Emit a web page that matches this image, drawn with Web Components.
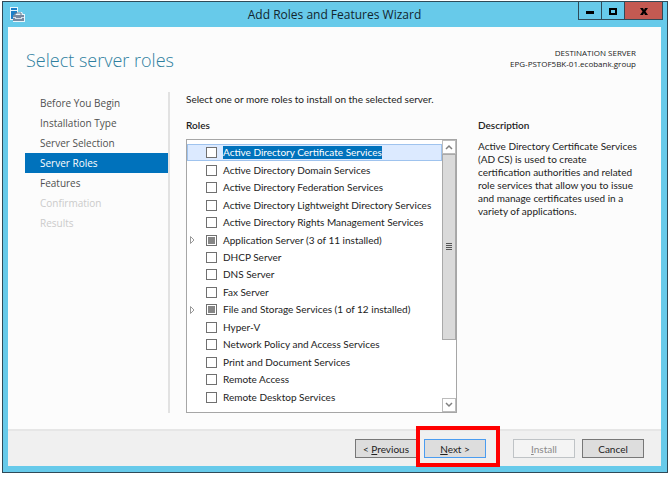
<!DOCTYPE html>
<html lang="en">
<head>
<meta charset="utf-8">
<meta name="viewport" content="width=device-width, initial-scale=1">
<title>Add Roles and Features Wizard</title>
<style>
    body {
        margin: 0;
        background: #fff;
        color: #222;
        font: 10px/13px Lato, "Open Sans", sans-serif;
    }
</style>
</head>
<body>
<wizard-window caption="Add Roles and Features Wizard">
    <wizard-header slot="header" heading="Select server roles" server="EPG-PSTOF5BK-01.ecobank.group"></wizard-header>
    <wizard-steps slot="steps" current="Server Roles"></wizard-steps>
    <role-list slot="main"></role-list>
    <role-description slot="aside" heading="Description">Active Directory Certificate Services (AD CS) is used to create certification authorities and related role services that allow you to issue and manage certificates used in a variety of applications.</role-description>
    <wizard-button slot="footer" text="&lt; Previous" key="P"></wizard-button>
    <wizard-button slot="footer" text="Next &gt;" key="N" primary marked></wizard-button>
    <wizard-button slot="footer" text="Install" key="I" disabled></wizard-button>
    <wizard-button slot="footer" text="Cancel"></wizard-button>
</wizard-window>

<script>
class WizardWindow extends HTMLElement {
    constructor() {
        super();
        this.attachShadow({ mode: 'open' });
        this.shadowRoot.innerHTML = `
        <style>
        :host {
            display: flex;
            flex-direction: column;
            box-sizing: border-box;
            min-height: 100vh;
            padding: 1px 3px 4px 2px;
        }

        .frame {
            flex: 1;
            display: flex;
            flex-direction: column;
            padding: 0 6px 6px 5px;
            border: 1px solid #2f4a58;
            background: #67caea;
        }

        .titlebar {
            display: grid;
            grid-template-columns: 85px 1fr 85px;
            height: 25px;
        }

        .titlebar svg {
            display: block;
        }

        .app-icon {
            margin: 4px 0 0 2px;
        }

        h1 {
            margin: 0;
            padding-top: 4px;
            color: #12262e;
            font-family: "Open Sans", sans-serif;
            font-size: 12px;
            line-height: 18px;
            font-weight: 400;
            text-align: center;
            white-space: nowrap;
        }

        .controls {
            display: flex;
            justify-content: flex-end;
            align-items: flex-start;
            margin: -1px -2px 0 0;
        }

        .controls button {
            display: grid;
            place-items: center;
            box-sizing: border-box;
            width: 24px;
            height: 19px;
            margin: 0 0 0 -1px;
            padding: 0;
            border: 1px solid #2f4a58;
            background: #67caea;
        }

        .controls .close {
            width: 39px;
            background: #c45a52;
        }

        .client {
            flex: 1;
            display: flex;
            flex-direction: column;
            background: #fcfcfc;
        }

        .columns {
            flex: 1;
            display: grid;
            grid-template-columns: 145px 1fr 164px;
            padding: 0 19px 16px 17px;
        }

        .main {
            display: grid;
            padding: 0 21px 0 16px;
        }

        footer {
            display: flex;
            justify-content: flex-end;
            gap: 7px;
            padding: 8px 17px 8px 0;
            border-top: 2px solid #e6e6e6;
            background: #f0f0f0;
        }
        </style>

        <div class="frame">
            <div class="titlebar">
                <svg class="app-icon" width="16" height="16" viewBox="0 0 16 16">
                    <path d="M0 1h8v5h4l1 2h2v8H3v-2H0z" fill="#e8f6fc"/>
                    <path d="M1 2h6v2H1zM1 5h6v2L4 9v4H1z" fill="#1b7fc8"/>
                    <path d="M5 9V7h6v2" fill="none" stroke="#66788c"/>
                    <path d="M3 9h11v6H3z" fill="#7789a0"/>
                    <path d="M3 11h3v1h5v-1h3v1h-2v1H5v-1H3z" fill="#d5dee8"/>
                </svg>
                <h1>${this.getAttribute('caption')}</h1>
                <div class="controls">
                    <button type="button" aria-label="Minimize">
                        <svg width="10" height="10"><path d="M1 5h8v3H1z"/></svg>
                    </button>
                    <button type="button" aria-label="Maximize">
                        <svg width="10" height="10"><path d="M2 3h6v5H2z" fill="none" stroke="#000" stroke-width="2"/></svg>
                    </button>
                    <button type="button" class="close" aria-label="Close">
                        <svg width="10" height="10"><path d="M1 2h3l1 2 1-2h3L6.500 5.500 9 9H6L5 7 4 9H1l2.500-3.500z"/></svg>
                    </button>
                </div>
            </div>
            <div class="client">
                <slot name="header"></slot>
                <div class="columns">
                    <slot name="steps"></slot>
                    <div class="main"><slot name="main"></slot></div>
                    <slot name="aside"></slot>
                </div>
                <footer><slot name="footer"></slot></footer>
            </div>
        </div>
        `
    }
}

class WizardHeader extends HTMLElement {
    constructor() {
        super();
        this.attachShadow({ mode: 'open' });
        this.shadowRoot.innerHTML = `
        <style>
        :host {
            display: flex;
            justify-content: space-between;
            height: 65px;
            padding: 0 25px 0 18px;
            font-family: "Open Sans", sans-serif;
        }

        h2 {
            margin: 18px 0 0;
            color: #2f7f9f;
            font-size: 18px;
            line-height: 30px;
            font-weight: 300;
        }

        p {
            margin: 20px 0 0;
            font-size: 8px;
            line-height: 11px;
            text-align: right;
        }
        </style>

        <h2>${this.getAttribute('heading')}</h2>
        <p>DESTINATION SERVER<br>${this.getAttribute('server')}</p>
        `
    }
}

class WizardSteps extends HTMLElement {
    constructor() {
        super();
        const steps = ['Before You Begin', 'Installation Type', 'Server Selection', 'Server Roles', 'Features', 'Confirmation', 'Results'];
        const locked = ['Confirmation', 'Results'];
        const current = this.getAttribute('current');
        this.attachShadow({ mode: 'open' });
        this.shadowRoot.innerHTML = `
        <style>
        :host {
            display: block;
            border-right: 2px solid #e2e2e2;
            font-family: "Open Sans", sans-serif;
        }

        ul {
            margin: 0;
            padding: 1px 0 0;
            list-style: none;
        }

        a {
            display: block;
            padding-left: 15px;
            color: #505050;
            line-height: 20px;
            text-decoration: none;
        }

        a[aria-current] {
            background: #0072bc;
            color: #fff;
        }

        a[aria-disabled] {
            color: #cbcbcb;
        }
        </style>

        <nav>
            <ul>
                ${steps.map(step => `<li><a href="#"${step === current ? ' aria-current="step"' : ''}${locked.includes(step) ? ' aria-disabled="true"' : ''}>${step}</a></li>`).join('')}
            </ul>
        </nav>
        `
    }
}

class RoleItem extends HTMLElement {
    constructor() {
        super();
        this.attachShadow({ mode: 'open' });
        this.shadowRoot.innerHTML = `
        <style>
        :host {
            display: grid;
            grid-template-columns: 18px 1fr;
            align-items: center;
            box-sizing: border-box;
            min-height: 17px;
            border: 1px solid transparent;
        }

        :host([selected]) {
            border-color: #9fc3ee;
            background: #dceaff;
        }

        button {
            width: 10px;
            height: 10px;
            padding: 0;
            border: 0;
            background: none;
        }

        svg {
            display: block;
        }

        label {
            grid-column: 2;
            display: flex;
            align-items: center;
            gap: 6px;
            white-space: nowrap;
        }

        span {
            line-height: 13px;
        }

        input {
            appearance: none;
            display: grid;
            place-items: center;
            flex: none;
            box-sizing: border-box;
            width: 11px;
            height: 11px;
            margin: 0;
            border: 1px solid #707070;
            background: #fff;
        }

        input:indeterminate::before {
            content: "";
            width: 7px;
            height: 7px;
            background: #858585;
        }

        :host([selected]) span {
            background: #0072bc;
            color: #fff;
        }
        </style>

        ${this.hasAttribute('expandable') ? `
        <button type="button" aria-label="Expand">
            <svg width="10" height="10"><path d="M2.500 1.500v7L6 5z" fill="#fff" stroke="#999"/></svg>
        </button>` : ''}
        <label><input type="checkbox"><span><slot></slot></span></label>
        `
        this.shadowRoot.querySelector('input').indeterminate = this.hasAttribute('expandable');
    }
}

class RoleList extends HTMLElement {
    constructor() {
        super();
        this.attachShadow({ mode: 'open' });
        this.shadowRoot.innerHTML = `
        <style>
        :host {
            display: flex;
            flex-direction: column;
        }

        p {
            margin: 0;
            line-height: 14px;
        }

        h3 {
            margin: 12px 0 7px;
            font-size: 10px;
            line-height: 14px;
            font-weight: 600;
        }

        .box {
            flex: 1;
            display: grid;
            grid-template-columns: 1fr 14px;
            border: 1px solid #a6a6a6;
            background: #fff;
        }

        .items {
            display: grid;
            grid-auto-rows: 1fr;
            min-width: 0;
            padding: 4px 0 6px;
        }

        .scroll {
            display: flex;
            flex-direction: column;
        }

        .scroll button {
            display: grid;
            place-items: center;
            box-sizing: border-box;
            height: 14px;
            padding: 0;
            border: 1px solid #bcbcbc;
            background: #fff;
        }

        .track {
            flex: 1;
            display: grid;
            grid-template-rows: 187fr 58fr;
        }

        .thumb {
            display: grid;
            place-items: center;
            border: 1px solid #a9a9a9;
            background: #dadada;
        }
        </style>

        <p>Select one or more roles to install on the selected server.</p>
        <h3>Roles</h3>
        <div class="box">
            <div class="items">
                <role-item selected>Active Directory Certificate Services</role-item>
                <role-item>Active Directory Domain Services</role-item>
                <role-item>Active Directory Federation Services</role-item>
                <role-item>Active Directory Lightweight Directory Services</role-item>
                <role-item>Active Directory Rights Management Services</role-item>
                <role-item expandable>Application Server (3 of 11 installed)</role-item>
                <role-item>DHCP Server</role-item>
                <role-item>DNS Server</role-item>
                <role-item>Fax Server</role-item>
                <role-item expandable>File and Storage Services (1 of 12 installed)</role-item>
                <role-item>Hyper-V</role-item>
                <role-item>Network Policy and Access Services</role-item>
                <role-item>Print and Document Services</role-item>
                <role-item>Remote Access</role-item>
                <role-item>Remote Desktop Services</role-item>
            </div>
            <div class="scroll">
                <button type="button" aria-label="Scroll up">
                    <svg width="8" height="6"><path d="M1 5l3-3 3 3" fill="none" stroke="#808080" stroke-width="1.500"/></svg>
                </button>
                <div class="track">
                    <div class="thumb">
                        <svg width="6" height="8"><path d="M0 0h6v1H0zM0 2h6v1H0zM0 4h6v1H0zM0 6h6v1H0z" fill="#555"/></svg>
                    </div>
                </div>
                <button type="button" aria-label="Scroll down">
                    <svg width="8" height="6"><path d="M1 1l3 3 3-3" fill="none" stroke="#808080" stroke-width="1.500"/></svg>
                </button>
            </div>
        </div>
        `
    }
}

class RoleDescription extends HTMLElement {
    constructor() {
        super();
        this.attachShadow({ mode: 'open' });
        this.shadowRoot.innerHTML = `
        <style>
        :host {
            display: block;
            padding: 26px 4px 0 0;
        }

        h3 {
            margin: 0 0 8px;
            font-size: 10px;
            line-height: 14px;
            font-weight: 600;
        }

        p {
            margin: 0;
        }
        </style>

        <h3>${this.getAttribute('heading')}</h3>
        <p><slot></slot></p>
        `
    }
}

class WizardButton extends HTMLElement {
    constructor() {
        super();
        const key = this.getAttribute('key');
        const text = this.getAttribute('text').replace('<', '&lt;').replace('>', '&gt;');
        this.attachShadow({ mode: 'open' });
        this.shadowRoot.innerHTML = `
        <style>
        :host {
            display: block;
            position: relative;
        }

        button {
            box-sizing: border-box;
            display: block;
            width: 62px;
            height: 19px;
            padding: 0;
            border: 1px solid #777;
            background: #ddd;
            color: #222;
            font: inherit;
            line-height: 16px;
        }

        :host([primary]) button {
            border-color: #4a9cf0;
        }

        :host([disabled]) button {
            border-color: #bfc3c6;
            background: #f4f4f4;
            color: #8a8a8a;
        }

        :host([marked]) {
            margin-right: 20px;
        }

        /* red frame laid over the footer, around the button */
        :host([marked])::after {
            content: "";
            position: absolute;
            inset: -13px -14px -9px -8px;
            border: 4px solid #f00;
            pointer-events: none;
        }
        </style>

        <button type="button"${this.hasAttribute('disabled') ? ' disabled' : ''}>${key ? text.replace(key, `<u>${key}</u>`) : text}</button>
        `
    }
}

customElements.define('wizard-window', WizardWindow)
customElements.define('wizard-header', WizardHeader)
customElements.define('wizard-steps', WizardSteps)
customElements.define('role-item', RoleItem)
customElements.define('role-list', RoleList)
customElements.define('role-description', RoleDescription)
customElements.define('wizard-button', WizardButton)
</script>
</body>
</html>
